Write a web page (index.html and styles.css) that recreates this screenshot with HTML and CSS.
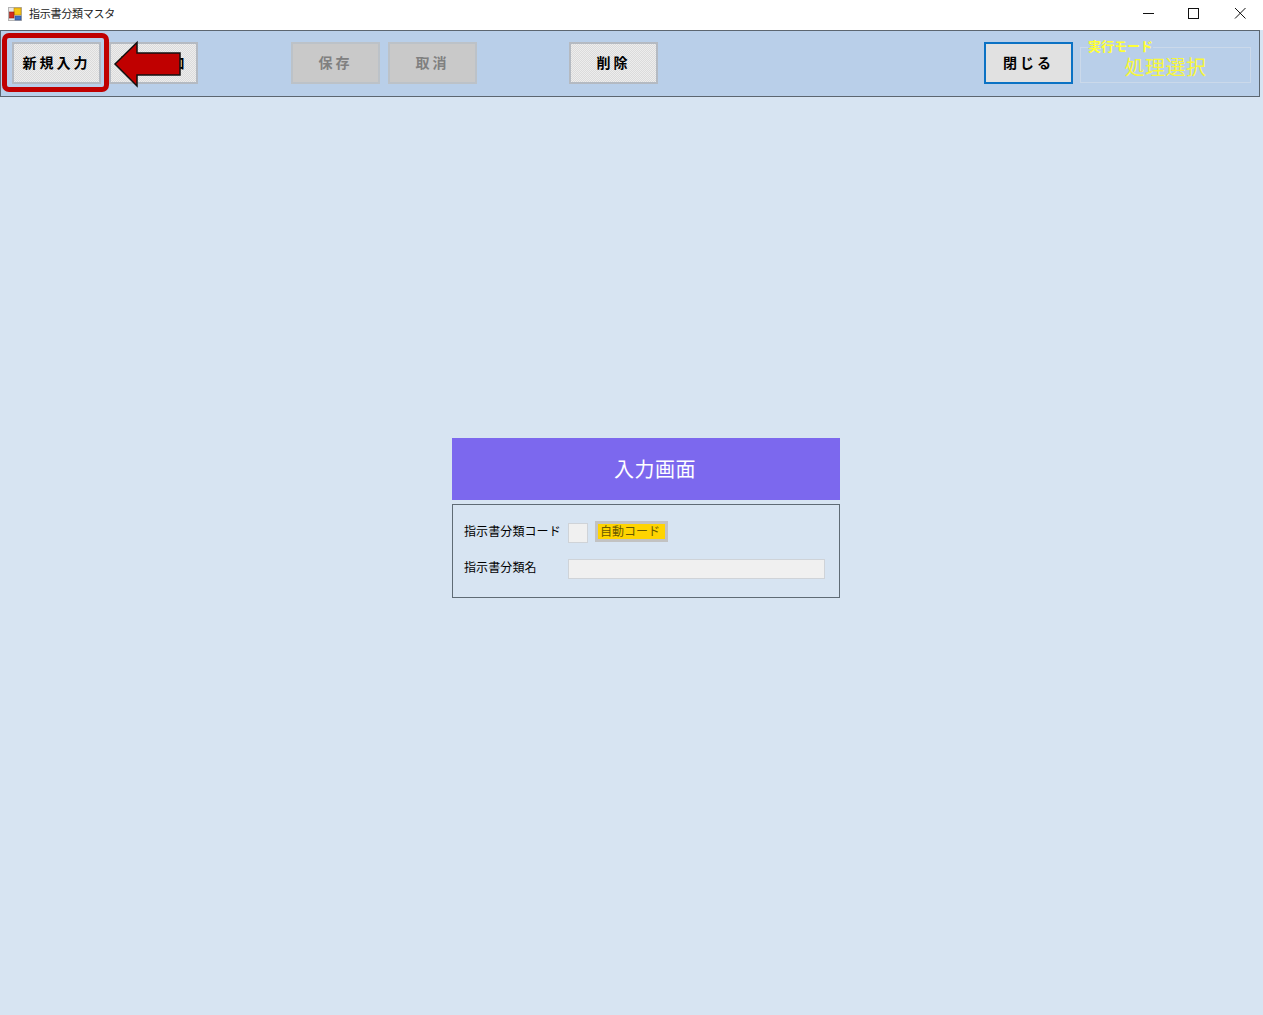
FILE: index.html
```html
<!DOCTYPE html>
<html lang="ja">
<head>
<meta charset="utf-8">
<title>指示書分類マスタ</title>
<link rel="stylesheet" href="styles.css">
</head>
<body>
<header class="titlebar">
  <svg class="app-icon" viewBox="0 0 14 14" width="14" height="14" aria-hidden="true">
    <rect x="0.5" y="0.5" width="13" height="13" fill="#e8e8e8" stroke="#b4b4b4"/>
    <rect x="6" y="1" width="7" height="7" fill="#f5c518" stroke="#b8860b" stroke-width="0.6"/>
    <rect x="1.500" y="5" width="4.500" height="6" fill="#d42a1e" stroke="#8c1a12" stroke-width="0.6"/>
    <rect x="7" y="9" width="6" height="4" fill="#3f6fc4" stroke="#2a4c8c" stroke-width="0.6"/>
  </svg>
  <span class="title">指示書分類マスタ</span>
  <div class="win-controls">
    <svg class="win-btn" viewBox="0 0 46 30" aria-hidden="true"><path d="M18 13.5h11" stroke="#111" fill="none"/></svg>
    <svg class="win-btn" viewBox="0 0 46 30" aria-hidden="true"><rect x="17.5" y="8.5" width="10" height="10" stroke="#111" fill="none"/></svg>
    <svg class="win-btn" viewBox="0 0 46 30" aria-hidden="true"><path d="M18 8l10.500 10.500M28.500 8L18 18.500" stroke="#111" fill="none"/></svg>
  </div>
</header>

<section class="toolbar">
  <button class="btn">新規入力</button>
  <button class="btn">複写追加</button>
  <button class="btn btn-off group-a">保存</button>
  <button class="btn btn-off">取消</button>
  <button class="btn group-b">削除</button>
  <button class="btn btn-close">閉じる</button>
  <fieldset class="mode">
    <legend class="mode-label">実行モード</legend>
    <div class="mode-value">処理選択</div>
  </fieldset>
  <div class="highlight"></div>
  <svg class="arrow" viewBox="0 0 72 50" width="72" height="50" aria-hidden="true">
    <path d="M3 24 L25 2.500 V13 H68 V35 H25 V46 Z" fill="#c00000" stroke="#111" stroke-width="1.500" stroke-linejoin="miter"/>
  </svg>
</section>

<main class="content">
  <div class="panel">
    <h1 class="panel-head">入力画面</h1>
    <div class="form-box">
      <div class="row">
        <label class="label">指示書分類コード</label>
        <span class="input input-code"></span>
        <span class="auto-btn"><span class="auto-inner">自動コード</span></span>
      </div>
      <div class="row row-name">
        <label class="label">指示書分類名</label>
        <span class="input input-name"></span>
      </div>
    </div>
  </div>
</main>
</body>
</html>
```

FILE: styles.css
```css
* { box-sizing: border-box; }

html, body {
  margin: 0;
  height: 100%;
  overflow: hidden;
  background: #d7e4f2;
  font-family: "Noto Sans CJK JP", "Liberation Sans", sans-serif;
  color: #000;
}

.titlebar {
  display: flex;
  align-items: center;
  height: 30px;
  background: #fff;
  padding-left: 8px;
}
.app-icon { flex: none; margin-top: -3px; }
.title { margin-left: 7px; margin-top: -5px; font-size: 11px; letter-spacing: -0.25px; color: #222; }
.win-controls { display: flex; margin-left: auto; align-self: flex-start; }
.win-btn { width: 46px; height: 30px; display: block; }

.toolbar {
  position: relative;
  display: flex;
  align-items: flex-start;
  gap: 8px;
  width: 1260px;
  height: 67px;
  padding: 11px 8px 0 11px;
  background: #b9cfe9;
  border: 1px solid #5c6670;
}

.btn {
  flex: none;
  width: 89px;
  height: 42px;
  padding: 0 0 2px;
  font-family: inherit;
  font-size: 14px;
  font-weight: 700;
  letter-spacing: 3px;
  color: #000;
  border: 2px solid #b4bac2;
  background: repeating-conic-gradient(#ededed 0 25%, #dbdbdb 0 50%) 0 0 / 2px 2px;
}
.btn-off {
  background: #c9c9c9;
  border-color: #bcc2c8;
  color: #808080;
}
.group-a { margin-left: 85px; }
.group-b { margin-left: 84px; }
.btn-close {
  margin-left: auto;
  background: #e1e1e1;
  border-color: #0b72c4;
}

.mode {
  flex: none;
  width: 171px;
  height: 44px;
  margin: -3px 0 0 -1px;
  padding: 0;
  border: 1px solid #cbd9ea;
}
.mode-label {
  margin-left: 7px;
  padding: 0 0 2px;
  font-size: 13px;
  line-height: 14px;
  font-weight: 700;
  color: #ffff33;
}
.mode-value {
  font-size: 20px;
  line-height: 24px;
  letter-spacing: 0.500px;
  color: #f6f63c;
  text-align: center;
}

.highlight {
  position: absolute;
  left: 1px;
  top: 2px;
  width: 107px;
  height: 59px;
  border: 5px solid #c00000;
  border-radius: 7px;
}
.arrow {
  position: absolute;
  left: 111px;
  top: 9px;
}

.content { padding: 341px 0 0 452px; }
.panel { width: 388px; }
.panel-head {
  margin: 0 0 4px;
  height: 62px;
  background: #7c68ee;
  color: #fff;
  font-size: 20px;
  font-weight: 400;
  letter-spacing: 0.500px;
  line-height: 61px;
  padding-left: 162px;
}
.form-box {
  height: 94px;
  padding: 16px 14px 0 11px;
  border: 1px solid #5f6b75;
}
.row { display: flex; align-items: center; height: 22px; }
.row-name { margin-top: 14px; }
.label { width: 104px; flex: none; margin-bottom: 4px; font-size: 12px; letter-spacing: 0.1px; color: #000; }
.input {
  display: block;
  flex: none;
  align-self: flex-end;
  height: 20px;
  background: #f0f0f0;
  border: 1px solid #cfd3d8;
}
.input-code { width: 20px; }
.input-name { width: 257px; }
.auto-btn {
  display: block;
  flex: none;
  align-self: flex-start;
  width: 73px;
  height: 21px;
  margin-left: 7px;
  padding: 3px;
  background: #c2c2c2;
}
.auto-inner {
  display: block;
  height: 15px;
  padding-left: 2px;
  background: #ffd400;
  color: #6a5800;
  font-size: 12px;
  line-height: 13px;
  white-space: nowrap;
}
```
